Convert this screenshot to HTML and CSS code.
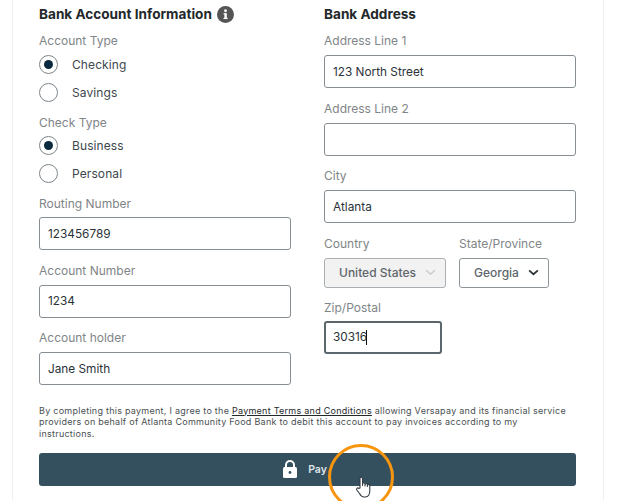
FILE: index.html
```html
<!DOCTYPE html>
<html lang="en">
<head>
  <meta charset="UTF-8" />
  <title>Bank Account Payment</title>
  <link rel="stylesheet" href="styles.css">
</head>
<body>
  <div class="card">
    <form class="columns">
      <section class="col">
        <h2>Bank Account Information
          <svg class="info" viewBox="0 0 18 18" width="17" height="17"><circle cx="9" cy="9" r="9" fill="#555"/><rect x="7.8" y="7.6" width="2.6" height="6" fill="#fff"/><rect x="6.9" y="7.6" width="2" height="1.2" fill="#fff"/><rect x="6.9" y="12.6" width="4.4" height="1.2" fill="#fff"/><circle cx="9" cy="5" r="1.5" fill="#fff"/></svg>
        </h2>
        <div class="label first">Account Type</div>
        <div class="radio"><span class="dot on"></span>Checking</div>
        <div class="radio"><span class="dot"></span>Savings</div>
        <div class="label type check">Check Type</div>
        <div class="radio"><span class="dot on"></span>Business</div>
        <div class="radio"><span class="dot"></span>Personal</div>
        <div class="label type">Routing Number</div>
        <div class="input">123456789</div>
        <div class="label">Account Number</div>
        <div class="input">1234</div>
        <div class="label">Account holder</div>
        <div class="input">Jane Smith</div>
      </section>
      <section class="col">
        <h2>Bank Address</h2>
        <div class="label first">Address Line 1</div>
        <div class="input tall">123 North Street</div>
        <div class="label">Address Line 2</div>
        <div class="input"></div>
        <div class="label">City</div>
        <div class="input">Atlanta</div>
        <div class="row">
          <div>
            <div class="label">Country</div>
            <div class="select disabled">United States
              <svg viewBox="0 0 12 8" width="11" height="7"><path d="M1 1.5l5 4.5 5-4.5" fill="none" stroke="#c4c6c8" stroke-width="1.4"/></svg>
            </div>
          </div>
          <div>
            <div class="label">State/Province</div>
            <div class="select">Georgia
              <svg viewBox="0 0 12 8" width="11" height="7"><path d="M1 1.5l5 4.5 5-4.5" fill="none" stroke="#2b3338" stroke-width="2"/></svg>
            </div>
          </div>
        </div>
        <div class="label zip-label">Zip/Postal</div>
        <div class="input zip">30316<span class="caret"></span></div>
      </section>
    </form>
    <p class="terms">By completing this payment, I agree to the <a href="#">Payment Terms and Conditions</a> allowing Versapay and its financial service providers on behalf of Atlanta Community Food Bank to debit this account to pay invoices according to my instructions.</p>
    <button class="pay" type="button">
      <svg viewBox="0 0 14 18" width="14" height="18"><path d="M3 8V5a4 4 0 0 1 8 0V8" fill="none" stroke="#fff" stroke-width="2"/><rect x="0" y="7" width="14" height="11" rx="1.500" fill="#fff"/><circle cx="7" cy="12.500" r="1.400" fill="#34505f"/></svg>
      Pay
    </button>
  </div>
  <div class="ring"></div>
  <svg class="hand" viewBox="0 0 17 22" width="17" height="22"><path d="M5 12V2.600a1.300 1.300 0 0 1 2.600 0V9.500V8a1.200 1.200 0 0 1 2.400 0v2V8.800a1.200 1.200 0 0 1 2.400 0v1.600-.8a1.200 1.200 0 0 1 2.400 0V15c0 3-1.500 6-4.500 6H9c-2.500 0-3.500-1.500-4.500-3.500L1.800 14c-.9-1.500 1-2.800 2-1.500z" fill="#fff" stroke="#333b40" stroke-width="1.100" stroke-linejoin="round"/></svg>
</body>
</html>
```

FILE: styles.css
```css
html, body {
  margin: 0;
  height: 501px;
  overflow: hidden;
  background: #fff;
}
body {
  position: relative;
  font-family: Inter, "Open Sans", sans-serif;
  font-size: 12px;
  color: #2b3338;
}
.card {
  box-sizing: border-box;
  width: 592px;
  height: 501px;
  margin-left: 12px;
  padding: 5px 26px 0;
  border-left: 1px solid #f0f0f0;
  border-right: 1px solid #f0f0f0;
}
.columns {
  display: flex;
  gap: 33px;
}
.col {
  width: 252px;
}
h2 {
  display: flex;
  align-items: center;
  gap: 5px;
  margin: 0;
  height: 17px;
  font-size: 13.600px;
  font-weight: 700;
  color: #23282b;
}
.info {
  margin-top: 2px;
}
.label {
  height: 15px;
  line-height: 15px;
  margin: 12.500px 0 7px;
  color: #808587;
  font-size: 12px;
}
.label.first {
  margin-top: 11px;
  margin-bottom: 0;
}
.label.type {
  margin: 8.500px 0 1.500px;
}
.label.check {
  margin-top: 9px;
}
.label.type + .input {
  margin-top: 6px;
}
.zip-label {
  margin-bottom: 5.500px;
}
.radio {
  display: flex;
  align-items: center;
  height: 28px;
  color: #3d474d;
  letter-spacing: 0.1px;
}
.label.first + .radio {
  margin-top: 2px;
}
.dot {
  box-sizing: border-box;
  display: flex;
  align-items: center;
  justify-content: center;
  width: 19px;
  height: 19px;
  margin-right: 14px;
  border: 1px solid #7c858a;
  border-radius: 50%;
}
.dot.on::after {
  content: "";
  width: 9px;
  height: 9px;
  border-radius: 50%;
  background: #0b2a3f;
}
.input {
  box-sizing: border-box;
  display: flex;
  align-items: center;
  height: 33px;
  padding-left: 8px;
  border: 1px solid #868e93;
  border-radius: 3px;
  color: #2b3338;
  font-size: 11.800px;
}
.input.tall {
  margin-top: 7px;
}
.row {
  display: flex;
  gap: 13px;
}
.select {
  box-sizing: border-box;
  display: flex;
  align-items: center;
  justify-content: space-between;
  gap: 9px;
  height: 30px;
  padding: 0 9px 0 14px;
  border: 1px solid #8d9599;
  border-radius: 3px;
  color: #5e666b;
  font-weight: 500;
}
.select.disabled {
  background: #f2f2f2;
  border-color: #a9afb2;
}
.zip {
  width: 118px;
  border: 2px solid #5b666d;
  padding-left: 7px;
}
.caret {
  display: inline-block;
  width: 1px;
  height: 15px;
  margin-left: -1px;
  background: #111;
}
.terms {
  margin: 19.500px 0 0;
  padding-right: 8px;
  font-size: 9px;
  line-height: 11.500px;
  letter-spacing: 0.26px;
  color: #4a4f52;
}
.terms a {
  color: #23282b;
}
.pay {
  display: flex;
  align-items: center;
  justify-content: center;
  gap: 11px;
  width: 537px;
  height: 33px;
  margin-top: 13.500px;
  padding: 0 5px 0 0;
  border: 0;
  border-radius: 3px;
  background: #34505f;
  color: #dfe5e8;
  font: 600 10.500px Inter, sans-serif;
}
.ring {
  position: absolute;
  left: 328px;
  top: 444px;
  box-sizing: border-box;
  width: 66px;
  height: 66px;
  border: 3px solid #f7950f;
  border-radius: 50%;
}
.hand {
  position: absolute;
  left: 355px;
  top: 476px;
}
```
